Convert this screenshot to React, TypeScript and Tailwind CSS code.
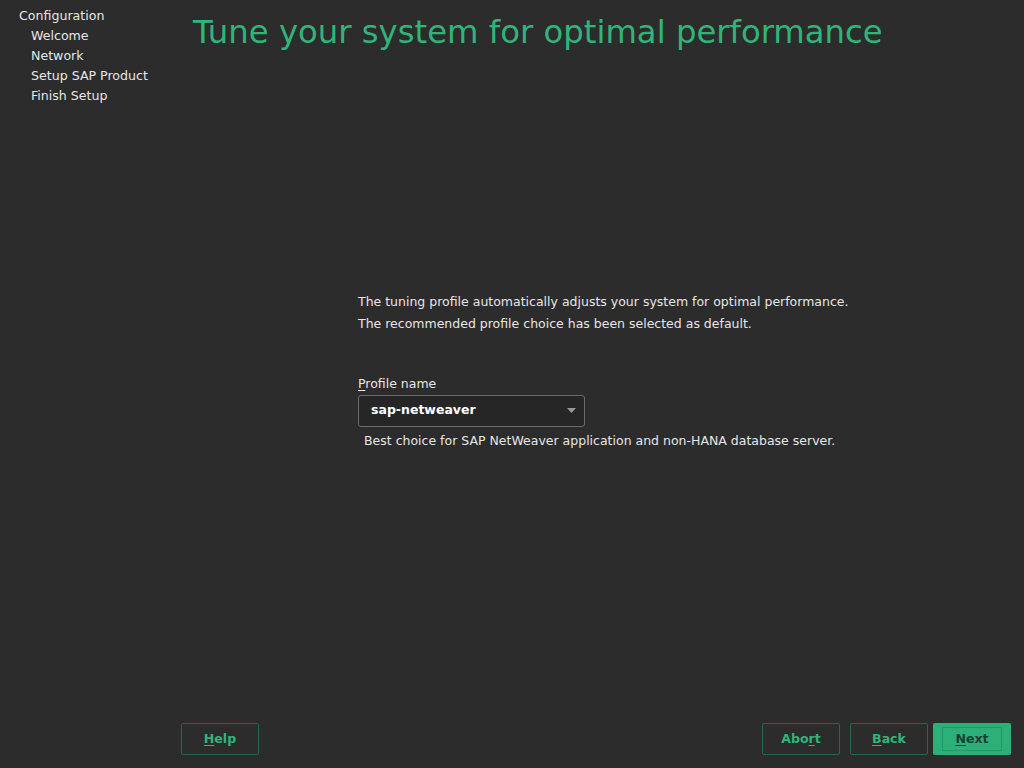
const font = { fontFamily: '"DejaVu Sans", "Liberation Sans", sans-serif' }

function Btn({ label, u, primary }: { label: string; u: number; primary?: boolean }) {
  const text = (
    <span>
      {label.slice(0, u)}
      <span className="underline underline-offset-2">{label[u]}</span>
      {label.slice(u + 1)}
    </span>
  )
  if (primary) {
    return (
      <button className="w-[78px] h-[32px] rounded-[2px] bg-[#2daf78] flex items-center justify-center">
        <span className="w-[60px] h-[24px] border border-[#23976a] flex items-center justify-center text-[12.6px] font-bold text-[#1f3d31]">
          {text}
        </span>
      </button>
    )
  }
  return (
    <button className="w-[78px] h-[32px] rounded-[2px] border border-[#1d6b4b] flex items-center justify-center text-[12.6px] font-bold text-[#2fb57a]">
      {text}
    </button>
  )
}

export default function App() {
  const steps = ["Welcome", "Network", "Setup SAP Product", "Finish Setup"]
  return (
    <div className="h-[768px] w-[1024px] bg-[#2c2c2c] text-[#e6e6e6] flex flex-col overflow-hidden" style={font}>
      <div className="flex flex-1">
        <div className="w-[180px] pt-[6px] text-[12.6px]">
          <div className="pl-[19px] h-[20px] leading-[20px]">Configuration</div>
          {steps.map((s) => (
            <div key={s} className="pl-[31px] h-[20px] leading-[20px]">
              {s}
            </div>
          ))}
        </div>
        <div className="flex-1 flex flex-col">
          <h1 className="pl-[13px] pt-[10px] text-[32.3px] leading-[44px] text-[#2fb57a] whitespace-nowrap">
            Tune your system for optimal performance
          </h1>
          <div className="flex-1 flex justify-center items-center">
            <div className="w-[488px] text-[12.5px] mt-[-36px] whitespace-nowrap">
              <p className="leading-[22px]">The tuning profile automatically adjusts your system for optimal performance.</p>
              <p className="leading-[22px]">The recommended profile choice has been selected as default.</p>
              <div className="mt-[39px] leading-[20px]">
                <span className="underline underline-offset-2">P</span>rofile name
              </div>
              <div className="mt-[1px] w-[227px] h-[32px] rounded-[3px] border border-[#6b6b6b] bg-[#262626] flex items-center justify-between pl-[12px] pr-[8px]">
                <span className="font-bold text-white">sap-netweaver</span>
                <svg width="9" height="5" viewBox="0 0 9 5">
                  <path d="M0 0 L9 0 L4.5 5 Z" fill="#9a9a9a" />
                </svg>
              </div>
              <div className="pl-[6px] mt-[4px] leading-[20px]">
                Best choice for SAP NetWeaver application and non-HANA database server.
              </div>
            </div>
          </div>
        </div>
      </div>
      <div className="h-[32px] mb-[13px] flex items-center pl-[181px] pr-[13px]">
        <Btn label="Help" u={0} />
        <div className="flex-1" />
        <div className="flex gap-[10px]">
          <Btn label="Abort" u={3} />
          <div className="flex gap-[5px]">
            <Btn label="Back" u={0} />
            <Btn label="Next" u={0} primary />
          </div>
        </div>
      </div>
    </div>
  )
}
